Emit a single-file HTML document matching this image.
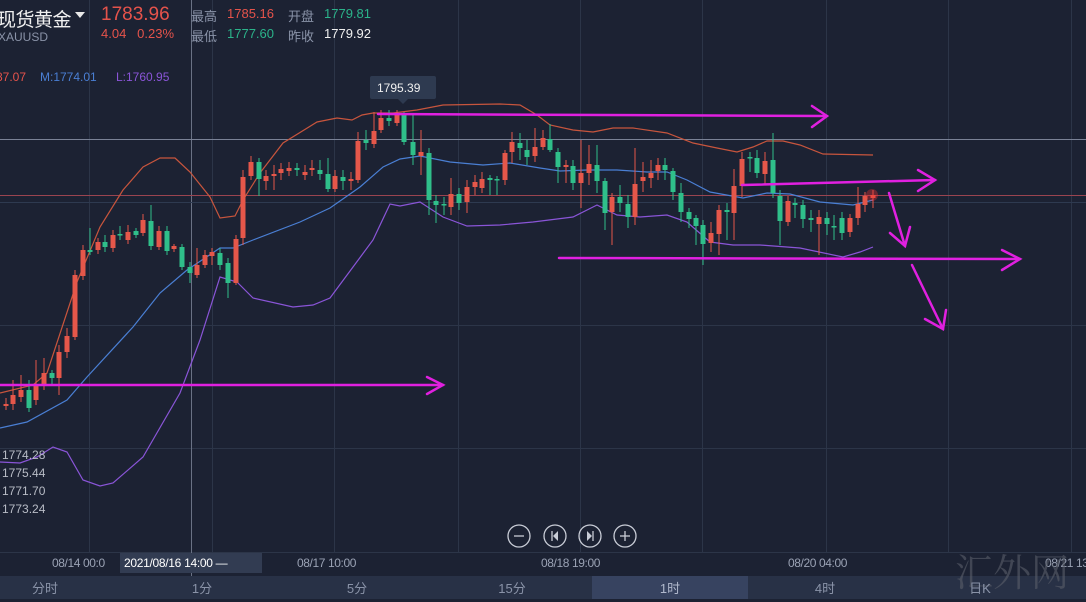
<!DOCTYPE html>
<html><head><meta charset="utf-8"><style>
body{margin:0;width:1086px;height:599px;overflow:hidden;background:#1c2233;font-family:"Liberation Sans","Noto Sans CJK SC",sans-serif;position:relative}
.a{position:absolute;white-space:nowrap}
.tab{position:absolute;top:576px;height:23px;line-height:26px;font-size:13px;color:#8a93a8;text-align:center;width:156px}
</style></head><body>
<svg width="1086" height="599" style="position:absolute;left:0;top:0">
<rect x="0" y="576" width="1086" height="23" fill="#283146"/>
<rect x="592" y="576" width="156" height="23" fill="#374360"/>
<g stroke="#2c3548" stroke-width="1">
<line x1="89.5" y1="0" x2="89.5" y2="552"/><line x1="212.5" y1="0" x2="212.5" y2="552"/><line x1="334.5" y1="0" x2="334.5" y2="552"/><line x1="458.5" y1="0" x2="458.5" y2="552"/><line x1="580.5" y1="0" x2="580.5" y2="552"/><line x1="702.5" y1="0" x2="702.5" y2="552"/><line x1="826.5" y1="0" x2="826.5" y2="552"/><line x1="948.5" y1="0" x2="948.5" y2="552"/><line x1="1071.5" y1="0" x2="1071.5" y2="552"/>
<line x1="0" y1="325.5" x2="1086" y2="325.5"/><line x1="0" y1="448.5" x2="1086" y2="448.5"/><line x1="0" y1="552.5" x2="1086" y2="552.5"/>
</g>
<line x1="191.5" y1="0" x2="191.5" y2="576" stroke="#6a7285"/>
<line x1="0" y1="139.5" x2="1086" y2="139.5" stroke="#7a8296"/>
<line x1="0" y1="195.5" x2="1086" y2="195.5" stroke="#9a4450"/>
<line x1="0" y1="202.5" x2="1086" y2="202.5" stroke="#2e3a50"/>
<g fill="none" stroke-width="1.2">
<polyline stroke="#c8553d" points="0,393 33,385 47,373 77,282 100,227 123,190 143,167 160,158 175,158 190,172 210,197 220,218 235,216 243,200 260,173 283,143 317,122 337,118 352,120 362,115 373,113 393,113 417,110 443,105 500,104 520,105 537,115 550,125 573,130 593,132 613,128 633,128 667,133 693,143 717,148 737,152 753,147 767,141 783,141 800,145 823,154 873,155"/>
<polyline stroke="#4a7fd4" points="0,428 27,422 67,400 87,377 133,327 160,293 187,270 220,248 233,248 253,240 300,222 330,208 360,187 383,167 400,159 420,156 450,162 483,165 510,163 540,168 560,171 587,170 617,170 647,172 667,172 687,180 710,192 743,198 767,193 790,194 820,202 853,205 873,200"/>
<polyline stroke="#8a55d8" points="0,462 20,463 37,457 53,447 67,452 83,480 100,486 113,483 143,457 180,393 200,340 220,277 237,282 253,298 293,307 313,305 330,298 353,267 373,240 390,204 400,206 420,202 443,217 467,226 500,225 533,222 573,217 597,205 617,215 640,217 667,215 687,222 710,242 733,245 760,245 800,248 843,257 860,252 873,247"/>
</g>
<g id="c"></g>
<circle cx="872" cy="195" r="6" fill="#ff3030" opacity="0.35"/>
<g stroke="#e020e0" stroke-width="2.5" fill="none" stroke-linecap="round">
<line x1="0" y1="385" x2="443" y2="385"/><polyline points="427,377 443,385 427,394"/>
<line x1="378" y1="114" x2="827" y2="116"/><polyline points="812,106 827,116 812,127"/>
<line x1="742" y1="185" x2="935" y2="180"/><polyline points="918,170 935,180 918,191"/>
<line x1="559" y1="258" x2="1020" y2="259"/><polyline points="1002,250 1020,259 1002,270"/>
<line x1="889" y1="193" x2="905" y2="246"/><polyline points="890,233 905,246 910,227"/>
<line x1="912" y1="265" x2="943" y2="329"/><polyline points="925,319 943,329 946,310"/>
</g>
<rect x="370" y="76" width="66" height="23" rx="2" fill="#2e3a50"/>
<polygon points="398,99 408,99 403,104" fill="#2e3a50"/>
<g stroke="#c8ccd6" stroke-width="1.3" fill="none">
<circle cx="519" cy="536" r="11"/><circle cx="555" cy="536" r="11"/><circle cx="590" cy="536" r="11"/><circle cx="625" cy="536" r="11"/>
<line x1="514" y1="536" x2="524" y2="536"/><line x1="620" y1="536" x2="630" y2="536"/><line x1="625" y1="531" x2="625" y2="541"/>
<line x1="552" y1="531" x2="552" y2="541"/><line x1="593" y1="531" x2="593" y2="541"/>
</g>
<polygon points="558,531 558,541 553,536" fill="#c8ccd6"/><polygon points="587,531 587,541 592,536" fill="#c8ccd6"/>
<rect x="120" y="553" width="142" height="20" fill="#323c52"/>
<polygon points="75,12 85,12 80,18" fill="#e8e8e8"/>
</svg>
<div class="a" style="left:-3px;top:5px;font-size:19px;color:#f0f0f0;letter-spacing:-0.5px">现货黄金</div>
<div class="a" style="left:-2px;top:30px;font-size:12px;color:#8a93a8">XAUUSD</div>
<div class="a" style="left:101px;top:4px;font-size:19px;color:#e5534b">1783.96</div>
<div class="a" style="left:101px;top:26px;font-size:13px;color:#e5534b">4.04&nbsp;&nbsp; 0.23%</div>
<div class="a" style="left:191px;top:6px;font-size:13px;color:#8a93a8">最高</div>
<div class="a" style="left:227px;top:6px;font-size:13px;color:#e5534b">1785.16</div>
<div class="a" style="left:288px;top:6px;font-size:13px;color:#8a93a8">开盘</div>
<div class="a" style="left:324px;top:6px;font-size:13px;color:#2bb38a">1779.81</div>
<div class="a" style="left:191px;top:26px;font-size:13px;color:#8a93a8">最低</div>
<div class="a" style="left:227px;top:26px;font-size:13px;color:#2bb38a">1777.60</div>
<div class="a" style="left:288px;top:26px;font-size:13px;color:#8a93a8">昨收</div>
<div class="a" style="left:324px;top:26px;font-size:13px;color:#f0f0f0">1779.92</div>
<div class="a" style="left:-4px;top:70px;font-size:12px;color:#e5534b">87.07</div>
<div class="a" style="left:40px;top:70px;font-size:12px;color:#4a7fd4">M:1774.01</div>
<div class="a" style="left:116px;top:70px;font-size:12px;color:#8a55d8">L:1760.95</div>
<div class="a" style="left:377px;top:81px;font-size:12px;color:#f0f0f0">1795.39</div>
<div class="a" style="left:2px;top:446px;font-size:12px;color:#b8bcc6;line-height:18px">1774.28<br>1775.44<br>1771.70<br>1773.24</div>
<div class="a" style="left:52px;top:556px;font-size:12px;color:#9aa2b4;letter-spacing:-0.4px">08/14 00:0</div>
<div class="a" style="left:124px;top:556px;font-size:12px;color:#fff;letter-spacing:-0.3px">2021/08/16 14:00 —</div>
<div class="a" style="left:297px;top:556px;font-size:12px;color:#9aa2b4;letter-spacing:-0.4px">08/17 10:00</div>
<div class="a" style="left:541px;top:556px;font-size:12px;color:#9aa2b4;letter-spacing:-0.4px">08/18 19:00</div>
<div class="a" style="left:788px;top:556px;font-size:12px;color:#9aa2b4;letter-spacing:-0.4px">08/20 04:00</div>
<div class="a" style="left:1045px;top:556px;font-size:12px;color:#9aa2b4;letter-spacing:-0.4px">08/21 13</div>
<div class="a" style="left:955px;top:542px;font-size:38px;color:#5a5f6a;opacity:0.6;font-family:'Noto Serif CJK SC',serif">汇外网</div>
<div class="tab" style="left:-33px">分时</div><div class="tab" style="left:124px">1分</div><div class="tab" style="left:279px">5分</div><div class="tab" style="left:434px">15分</div><div class="tab" style="left:592px;color:#b0b8cc">1时</div><div class="tab" style="left:747px">4时</div><div class="tab" style="left:902px">日K</div>
<script>
var d=[[6,404,406,398,410],[13,395,404,380,410],[21,390,397,375,402],[29,408,390,380,412],[36,384,400,360,405],[44,373,385,358,390],[52,378,373,370,385],[59,352,378,345,395],[67,336,352,328,358],[75,275,337,270,340],[83,250,276,245,280],[90,252,250,228,255],[98,242,250,238,254],[105,247,242,235,252],[113,235,248,230,252],[120,235,234,226,240],[128,232,240,225,244],[136,235,231,228,238],[143,220,233,214,236],[151,246,221,205,250],[159,231,247,226,250],[167,251,231,226,255],[174,246,249,244,252],[182,267,247,244,270],[190,273,267,262,283],[197,265,275,248,278],[205,255,265,250,268],[212,252,256,248,265],[220,265,253,248,270],[228,283,263,258,298],[236,239,283,235,285],[243,177,238,170,245],[251,162,176,156,180],[259,179,162,158,196],[266,176,181,170,190],[274,174,176,165,190],[281,169,173,163,180],[289,168,171,162,176],[297,170,168,163,176],[305,172,175,165,180],[312,168,170,160,176],[320,174,170,160,180],[328,189,174,158,192],[335,176,189,170,192],[343,181,177,170,190],[351,179,181,172,190],[358,141,180,132,183],[366,143,140,130,150],[374,131,144,112,148],[381,118,130,110,133],[389,121,118,110,126],[397,115,123,110,126],[404,142,115,112,145],[413,155,142,115,165],[421,152,156,130,175],[429,200,153,148,215],[436,205,201,195,223],[444,205,204,197,215],[451,194,207,178,215],[459,203,194,188,210],[467,187,202,180,213],[475,182,187,175,195],[482,179,188,172,193],[490,180,178,175,195],[497,180,179,176,195],[505,153,180,150,185],[512,142,152,132,163],[520,148,143,133,160],[527,157,150,140,165],[535,147,156,128,162],[543,138,147,130,150],[550,150,139,124,152],[558,167,152,148,183],[566,165,167,160,183],[573,183,166,160,190],[581,173,183,140,208],[589,164,173,145,185],[597,181,165,145,193],[605,213,181,178,230],[612,197,212,193,245],[620,203,197,185,212],[628,217,204,195,228],[635,184,217,148,225],[643,177,181,162,192],[651,173,178,160,188],[658,165,171,158,180],[665,170,165,158,180],[673,192,171,168,200],[681,212,193,183,222],[689,219,212,208,228],[696,226,218,215,245],[703,244,225,220,265],[711,233,243,222,252],[719,210,234,205,255],[727,212,210,203,240],[734,186,213,169,240],[742,159,186,152,197],[750,158,157,152,172],[757,173,158,150,178],[765,161,174,152,185],[773,193,160,133,198],[780,221,196,190,245],[788,201,222,196,226],[795,205,203,198,218],[803,219,205,200,228],[811,220,218,210,232],[819,217,224,210,255],[827,224,218,212,235],[834,226,226,215,240],[842,233,218,212,240],[850,218,232,214,237],[858,204,218,187,225],[865,196,205,192,212],[873,195,198,190,208]];
var s='';d.forEach(function(c){var up=c[2]>c[1];var col=up?'#e5574a':'#2fbf8a';var t=Math.min(c[1],c[2]),h=Math.max(1.5,Math.abs(c[2]-c[1]));s+='<line x1="'+c[0]+'" y1="'+c[3]+'" x2="'+c[0]+'" y2="'+c[4]+'" stroke="'+col+'" stroke-width="1"/><rect x="'+(c[0]-2.5)+'" y="'+t+'" width="5" height="'+h+'" fill="'+col+'"/>';});
document.getElementById('c').innerHTML=s;
</script>
</body></html>
